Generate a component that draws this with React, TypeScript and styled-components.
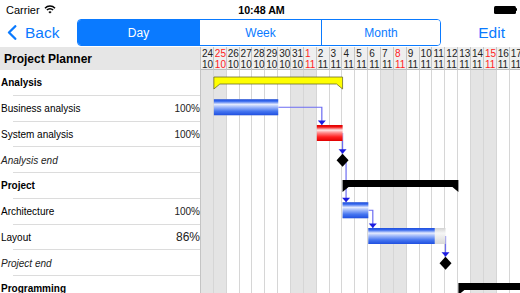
import React from "react";
import styled, { createGlobalStyle } from "styled-components";

const COL_W = 12.87;
const ROW_H = 25.75;
const COLS = 25;
const BLUE = "#0a7aff";

const days = [24, 25, 26, 27, 28, 29, 30, 31, 1, 2, 3, 4, 5, 6, 7, 8, 9, 10, 11, 12, 13, 14, 15, 16, 17];
const shaded = new Set([0, 1, 7, 8, 14, 15, 21, 22]);
const redCols = new Set([1, 8, 15, 22]);

type Kind = "group" | "task" | "milestone";
type Task = { name: string; kind: Kind; pct?: string; pctSize?: number };

const tasks: Task[] = [
  { name: "Analysis", kind: "group" },
  { name: "Business analysis", kind: "task", pct: "100%", pctSize: 10 },
  { name: "System analysis", kind: "task", pct: "100%", pctSize: 10 },
  { name: "Analysis end", kind: "milestone" },
  { name: "Project", kind: "group" },
  { name: "Architecture", kind: "task", pct: "100%", pctSize: 10 },
  { name: "Layout", kind: "task", pct: "86%", pctSize: 12 },
  { name: "Project end", kind: "milestone" },
  { name: "Programming", kind: "group" },
];

const GlobalStyle = createGlobalStyle`
  html, body {
    margin: 0;
    padding: 0;
    background: #fff;
  }
  body {
    font-family: "Liberation Sans", Arial, sans-serif;
    color: #000;
  }
`;

const Screen = styled.div`
  width: 520px;
  height: 293px;
  overflow: hidden;
  display: flex;
  flex-direction: column;
  background: #fff;
`;

const StatusBar = styled.div`
  height: 19px;
  flex-shrink: 0;
  display: grid;
  grid-template-columns: 1fr auto 1fr;
  align-items: center;
  padding: 0 3px 0 6px;
  font-size: 11px;
`;

const Carrier = styled.div`
  display: flex;
  align-items: center;
  gap: 4px;
`;

const Clock = styled.div`
  font-weight: bold;
  font-size: 10.7px;
`;

const Battery = styled.div`
  justify-self: end;
  display: flex;
  align-items: center;
`;

const BatteryBody = styled.div`
  width: 22px;
  height: 8px;
  background: #000;
  border-radius: 1.5px;
`;

const BatteryTip = styled.div`
  width: 1.5px;
  height: 3.5px;
  background: #000;
  border-radius: 0 1px 1px 0;
`;

const NavBar = styled.div`
  height: 28px;
  flex-shrink: 0;
  display: flex;
  align-items: flex-start;
`;

const BackButton = styled.div`
  width: 77px;
  height: 27px;
  flex-shrink: 0;
  display: flex;
  align-items: center;
  gap: 8px;
  padding-left: 7px;
  box-sizing: border-box;
  color: ${BLUE};
  font-size: 15.5px;
`;

const Segmented = styled.div`
  width: 364px;
  height: 27px;
  flex-shrink: 0;
  display: grid;
  grid-template-columns: 121px 122px 1fr;
  border: 1px solid ${BLUE};
  border-radius: 4px;
  box-sizing: border-box;
  overflow: hidden;
`;

const Segment = styled.div<{ $active?: boolean }>`
  display: flex;
  align-items: center;
  justify-content: center;
  font-size: 12px;
  background: ${(p) => (p.$active ? BLUE : "#fff")};
  color: ${(p) => (p.$active ? "#fff" : BLUE)};

  & + & {
    border-left: 1px solid ${BLUE};
  }
`;

const EditButton = styled.div`
  flex: 1;
  height: 27px;
  display: flex;
  align-items: center;
  justify-content: flex-end;
  padding-right: 15px;
  color: ${BLUE};
  font-size: 15.5px;
`;

const Main = styled.div`
  flex: 1;
  min-height: 0;
  display: flex;
`;

const LeftPanel = styled.div`
  width: 201px;
  flex-shrink: 0;
  border-right: 1px solid #c4c4c4;
  box-sizing: border-box;
`;

const PanelHeader = styled.div`
  height: 23px;
  display: flex;
  align-items: center;
  padding-left: 4px;
  background: #e6e6e6;
  font-size: 12px;
  font-weight: bold;
`;

const TaskRow = styled.div<{ $kind: Kind }>`
  height: ${ROW_H}px;
  display: flex;
  align-items: center;
  justify-content: space-between;
  padding-left: 1px;
  box-sizing: border-box;
  font-size: 10px;
  font-weight: ${(p) => (p.$kind === "group" ? "bold" : "normal")};
  font-style: ${(p) => (p.$kind === "milestone" ? "italic" : "normal")};
  color: ${(p) => (p.$kind === "milestone" ? "#222" : "#000")};
  background: linear-gradient(#dcdcdc, #dcdcdc) no-repeat right bottom / calc(100% - 13px) 1px;
`;

const Pct = styled.span<{ $size: number }>`
  font-size: ${(p) => p.$size}px;
  color: #222;
`;

const Chart = styled.div`
  flex: 1;
  min-width: 0;
  overflow: hidden;
  display: flex;
  flex-direction: column;
`;

const ChartHeader = styled.div`
  height: 23px;
  flex-shrink: 0;
  display: grid;
  grid-template-columns: repeat(${COLS}, ${COL_W}px);
  background: #efefef;
  border-bottom: 1px solid #bdbdbd;
  box-sizing: border-box;
`;

const DateCell = styled.div<{ $red?: boolean }>`
  border-right: 1px solid #c6c6c6;
  padding: 2px 0 0 1px;
  font-size: 10px;
  line-height: 10.5px;
  color: ${(p) => (p.$red ? "#ff1c1c" : "#222")};
  white-space: nowrap;
`;

const ChartBody = styled.div`
  flex: 1;
  position: relative;
`;

const Columns = styled.div`
  height: 100%;
  display: grid;
  grid-template-columns: repeat(${COLS}, ${COL_W}px);
`;

const DayColumn = styled.div<{ $shade?: boolean }>`
  background: ${(p) => (p.$shade ? "#e4e4e4" : "#fff")};
  border-right: 1px solid #d6d6d6;
`;

const Overlay = styled.svg`
  position: absolute;
  top: 0;
  left: 0;
  pointer-events: none;
`;

const x = (c: number) => c * COL_W;
const y = (r: number) => r * ROW_H;
const barTop = (r: number) => y(r) + 3.5;
const barMid = (r: number) => y(r) + 11.5;
const msMid = (r: number) => y(r) + ROW_H / 2;
const msTop = (r: number) => msMid(r) - 6.5;

const bars = [
  { row: 1, from: 1, to: 6, fill: "url(#blueBar)", done: 1 },
  { row: 2, from: 9, to: 11, fill: "url(#redBar)", done: 1 },
  { row: 5, from: 11, to: 13, fill: "url(#blueBar)", done: 1 },
  { row: 6, from: 13, to: 19, fill: "url(#blueBar)", done: 0.86 },
];

const summaries = [
  { row: 0, from: 1, to: 11, fill: "#ffff00", stroke: "#6d6d2a" },
  { row: 4, from: 11, to: 20, fill: "#000", stroke: "none" },
  { row: 8, from: 20, to: 28, fill: "#000", stroke: "none" },
];

const milestones = [
  { row: 3, at: 11 },
  { row: 7, at: 19 },
];

const links = [
  { d: `M${x(6)} ${barMid(1)} H${x(9) + 5} V${barTop(2)}`, tx: x(9) + 5, ty: barTop(2) },
  { d: `M${x(11)} ${barMid(2)} V${msTop(3)}`, tx: x(11), ty: msTop(3) },
  { d: `M${x(11) + 3.5} ${msMid(3)} V${barTop(5)}`, tx: x(11) + 3.5, ty: barTop(5) },
  { d: `M${x(13)} ${barMid(5)} H${x(13) + 4.5} V${barTop(6)}`, tx: x(13) + 4.5, ty: barTop(6) },
  { d: `M${x(19)} ${barMid(6)} V${msTop(7)}`, tx: x(19), ty: msTop(7) },
];

const summaryPoints = (row: number, from: number, to: number) => {
  const t = y(row) + 7;
  const b = t + 7;
  const x0 = x(from);
  const x1 = x(to);
  return `${x0},${t} ${x1},${t} ${x1},${b + 5} ${x1 - 6},${b} ${x0 + 6},${b} ${x0},${b + 5}`;
};

const GanttBars: React.FC = () => (
  <Overlay width={x(COLS)} height={y(tasks.length)}>
    <defs>
      <linearGradient id="blueBar" x1="0" y1="0" x2="0" y2="1">
        <stop offset="0" stopColor="#2150dc" />
        <stop offset="0.12" stopColor="#3366ee" />
        <stop offset="0.32" stopColor="#e4ebff" />
        <stop offset="0.5" stopColor="#9db7fa" />
        <stop offset="0.75" stopColor="#4676f0" />
        <stop offset="1" stopColor="#1f4fe0" />
      </linearGradient>
      <linearGradient id="redBar" x1="0" y1="0" x2="0" y2="1">
        <stop offset="0" stopColor="#e00000" />
        <stop offset="0.12" stopColor="#f01010" />
        <stop offset="0.32" stopColor="#ffe6e6" />
        <stop offset="0.5" stopColor="#ff8484" />
        <stop offset="0.75" stopColor="#ff2020" />
        <stop offset="1" stopColor="#e00000" />
      </linearGradient>
      <linearGradient id="restBar" x1="0" y1="0" x2="0" y2="1">
        <stop offset="0" stopColor="#d2d2d2" />
        <stop offset="0.32" stopColor="#f6f6f6" />
        <stop offset="1" stopColor="#d8d8d8" />
      </linearGradient>
    </defs>

    {links.map((l, i) => (
      <path key={i} d={l.d} fill="none" stroke="#6c6cf2" strokeWidth={1.2} />
    ))}

    {summaries.map((s, i) => (
      <polygon
        key={i}
        points={summaryPoints(s.row, s.from, s.to)}
        fill={s.fill}
        stroke={s.stroke}
        strokeWidth={0.8}
      />
    ))}

    {bars.map((b, i) => {
      const w = x(b.to) - x(b.from);
      return (
        <g key={i}>
          <rect x={x(b.from)} y={barTop(b.row)} width={w} height={16} fill="url(#restBar)" />
          <rect x={x(b.from)} y={barTop(b.row)} width={w * b.done} height={16} fill={b.fill} />
        </g>
      );
    })}

    {milestones.map((m, i) => {
      const cx = x(m.at);
      const cy = msMid(m.row);
      return (
        <polygon
          key={i}
          points={`${cx},${cy - 6.5} ${cx + 6},${cy} ${cx},${cy + 6.5} ${cx - 6},${cy}`}
          fill="#000"
        />
      );
    })}

    {links.map((l, i) => (
      <polygon
        key={i}
        points={`${l.tx - 4},${l.ty - 4.5} ${l.tx + 4},${l.ty - 4.5} ${l.tx},${l.ty}`}
        fill="#1c1ce0"
      />
    ))}
  </Overlay>
);

const WifiIcon = () => (
  <svg width="12" height="9" viewBox="0 0 12 9">
    <path d="M1 3.2 A7 7 0 0 1 11 3.2" fill="none" stroke="#000" strokeWidth="1.5" />
    <path d="M2.9 5.1 A4.3 4.3 0 0 1 9.1 5.1" fill="none" stroke="#000" strokeWidth="1.5" />
    <path d="M6 8.6 L4.4 6.9 A2.3 2.3 0 0 1 7.6 6.9 Z" fill="#000" />
  </svg>
);

const Chevron = () => (
  <svg width="10" height="15" viewBox="0 0 10 15">
    <path d="M8.3 1.2 L2 7.5 L8.3 13.8" fill="none" stroke={BLUE} strokeWidth="2.3" strokeLinecap="round" strokeLinejoin="round" />
  </svg>
);

const App: React.FC = () => {
  return (
    <Screen>
      <GlobalStyle />
      <StatusBar>
        <Carrier>
          Carrier
          <WifiIcon />
        </Carrier>
        <Clock>10:48 AM</Clock>
        <Battery>
          <BatteryBody />
          <BatteryTip />
        </Battery>
      </StatusBar>

      <NavBar>
        <BackButton>
          <Chevron />
          Back
        </BackButton>
        <Segmented>
          <Segment $active>Day</Segment>
          <Segment>Week</Segment>
          <Segment>Month</Segment>
        </Segmented>
        <EditButton>Edit</EditButton>
      </NavBar>

      <Main>
        <LeftPanel>
          <PanelHeader>Project Planner</PanelHeader>
          {tasks.map((t) => (
            <TaskRow key={t.name} $kind={t.kind}>
              <span>{t.name}</span>
              {t.pct && <Pct $size={t.pctSize ?? 10}>{t.pct}</Pct>}
            </TaskRow>
          ))}
        </LeftPanel>

        <Chart>
          <ChartHeader>
            {days.map((d, i) => (
              <DateCell key={i} $red={redCols.has(i)}>
                {d}
                <br />
                {i < 8 ? 10 : 11}
              </DateCell>
            ))}
          </ChartHeader>
          <ChartBody>
            <Columns>
              {days.map((_, i) => (
                <DayColumn key={i} $shade={shaded.has(i)} />
              ))}
            </Columns>
            <GanttBars />
          </ChartBody>
        </Chart>
      </Main>
    </Screen>
  );
};

export default App;
